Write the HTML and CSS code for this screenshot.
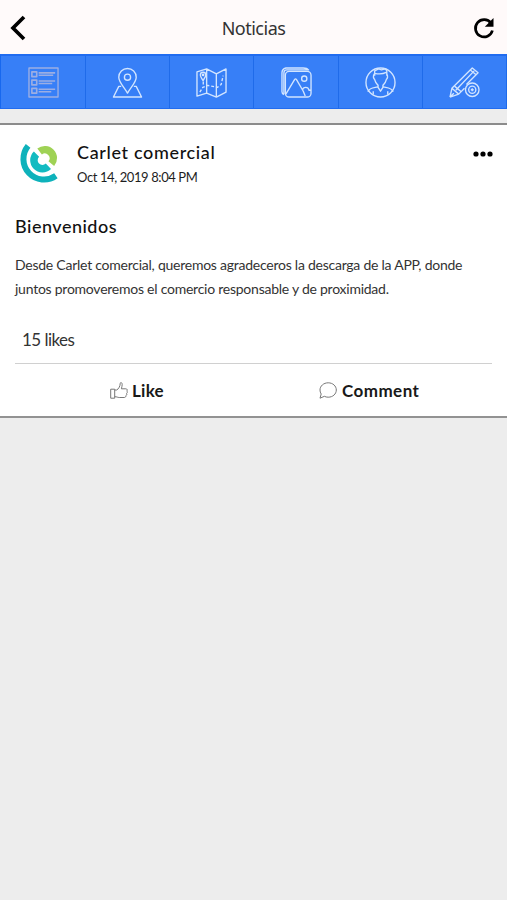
FILE: index.html
```html
<!DOCTYPE html>
<html lang="es">
<head>
<meta charset="utf-8">
<title>Noticias</title>
<link rel="stylesheet" href="styles.css">
</head>
<body>
<header class="topbar">
  <svg class="back" viewBox="0 0 16 26"><path d="M14 2 3 13l11 11"/></svg>
  <h1>Noticias</h1>
  <svg class="refresh" viewBox="0 0 24 24"><path class="arc" d="M19 7.200A8.600 8.600 0 1 0 20.400 14.500"/><path d="M21.500 2v8.700h-8.700z"/></svg>
</header>
<nav class="tabs">
  <a class="active"><svg viewBox="0 0 32 32"><path d="M1 1h30v30H1z"/><path class="rows" d="M4 5h5v5H4zM4 13.500h5v5H4zM4 22h5v5H4zM11 6h17M11 8.500h15M11 14.500h17M11 17h14M11 23h17M11 25.500h13"/></svg></a>
  <a><svg viewBox="0 0 32 32"><path d="M16 27C13 21 7 16 7 10.500a9 9 0 0 1 18 0C25 16 19 21 16 27zM9.500 20H7L1.500 31h29L25 20h-2.500"/><circle cx="16" cy="10.500" r="3.200"/></svg></a>
  <a><svg viewBox="0 0 32 32"><path d="m1 5 10-3 10 5 10-5v24l-10 5-10-4-10 3zM11 2v25M21 7v24M7.300 14C5.500 11 4.500 10 4.500 8.200a2.800 2.800 0 0 1 5.600 0C10.100 10 9 11 7.300 14z"/><path stroke-dasharray="3 2" d="M7.500 15v4M4 26l3-5 5-2 10 2 4-3 2-9"/><circle cx="7.300" cy="8.200" r=".7"/></svg></a>
  <a><svg viewBox="0 0 32 32"><rect x="4.500" y="4.500" width="26.500" height="26.500" rx="4"/><path d="M3 28.500q-2-1-2-3V6q0-4 4-5h18q4 0 5 2M3 28V6q0-3 3-3h23M5 28l9-15q1-1.500 2 0l7 12 2 5M22 24c1-4 6-4 7 0h2"/><circle cx="24" cy="12" r="2.700"/></svg></a>
  <a><svg viewBox="0 0 32 32"><circle cx="16" cy="16" r="15"/><path d="M9.500 7C8 10 9 12 10 13c1 4 3 5 3.500 6v2l2.500 4 2.500-4v-2c.5-1 2.500-2 3.500-6 1-1 2-3 .5-6M10 9V4l4-2 3 1 4-1 1.500 2v5M10 6.500q7 1.500 12-1M13 20.500c-2 1-8 0-10 5M19 20.500c2 1 8 0 10 5M8.500 25v3.500M23.500 25v3.500"/></svg></a>
  <a><svg viewBox="0 0 32 32"><path d="m1 31 2-9L24 1l6 5-12 12M1 31l9-3 6-6M3 22l7 6M7 24 26 4M6 20l6 5M22 3l6 5M1 31l4-4"/><circle cx="24" cy="23.500" r="7"/><circle cx="24" cy="23.500" r="3.700"/><path d="M24 22v3M22.500 23.500h3"/></svg></a>
</nav>
<article class="post">
  <div class="author">
    <svg class="logo" viewBox="0 0 42 44"><g fill="none"><path stroke="#0eb2bb" stroke-width="6" d="M9.100 5.900A20.600 20.600 0 0 0 36.900 35.800"/><path stroke="#13bbc1" stroke-width="7.500" d="M17.500 14.100a8.500 8.500 0 0 0 11.900 12.200"/><path stroke="#9fd255" stroke-width="7.500" d="M20.600 11.500a8.500 8.500 0 0 1 11.700 12.200"/></g></svg>
    <div class="who"><h2>Carlet comercial</h2><time>Oct 14, 2019 8:04 PM</time></div>
    <svg class="more" viewBox="0 0 20 6"><circle cx="3" cy="3" r="2.600"/><circle cx="10" cy="3" r="2.600"/><circle cx="17" cy="3" r="2.600"/></svg>
  </div>
  <h3>Bienvenidos</h3>
  <p>Desde Carlet comercial, queremos agradeceros la descarga de la APP, donde<br>juntos promoveremos el comercio responsable y de proximidad.</p>
  <div class="likes">15 likes</div>
  <div class="actions">
    <button class="like"><svg viewBox="0 0 18 17"><path d="M.7 7.200h4v9h-4zM4.700 8h2c2-1 3.500-4 3.500-6.500 0-1.500 2-1.300 2 1 0 1.500-.6 3-.8 4.300h4.400c1.500 0 1.800 1.300 1 2.200.8.800.6 1.800-.2 2.400.5.800.2 1.700-.7 2.200.2 1-.5 1.900-1.600 1.900h-5c-1.700 0-2.300-.8-4.600-.8"/></svg><span>Like</span></button>
    <button class="comment"><svg viewBox="0 0 18 17"><path d="M1 16.200 2.200 12A7 7 0 0 1 1 8C1 4 4.600.8 9.200.8S17.300 4 17.300 8s-3.500 7.200-8.100 7.200c-1.400 0-2.700-.3-3.800-.9z"/></svg><span>Comment</span></button>
  </div>
</article>
</body>
</html>
```

FILE: styles.css
```css
* { box-sizing: border-box; }
body { margin: 0; min-height: 900px; background: #ededed; color: #1e1e1e; font-family: Lato, "Liberation Sans", sans-serif; }
h1, h2, h3, p { margin: 0; white-space: nowrap; }
.topbar { height: 54px; padding: 2px 11px 0 10px; display: flex; align-items: center; justify-content: space-between; background: #fffafa; }
.topbar h1 { font: 400 18px/24px "Noto Sans", sans-serif; letter-spacing: -.5px; color: #333; margin-left: 9px; }
.back { width: 16px; height: 26px; fill: none; stroke: #000; stroke-width: 3.700; }
.refresh { width: 24px; height: 24px; }
.refresh .arc { fill: none; stroke: #000; stroke-width: 2.700; }
.tabs { height: 55px; display: grid; grid-template-columns: repeat(6, 1fr); padding-left: 1px; background: #377ff7; border-top: 2px solid #216cf0; border-bottom: 1px solid #216cf0; border-left: 1px solid #1768ef; }
.tabs a { display: flex; align-items: center; justify-content: center; border-right: 1px solid #1f6bea; padding-top: 1px; }
.tabs svg { width: 31px; height: 31px; fill: none; stroke: #d2e5ff; stroke-width: 1.400; stroke-linejoin: round; }
.tabs .active svg { stroke: #9caee3; }
.tabs .active .rows { stroke-width: 1.700; }
.post { height: 295px; margin-top: 14px; padding: 0 15px; background: #fff; border-top: 2px solid #8c8c8c; border-bottom: 2px solid #929292; }
.author { height: 79px; padding-top: 15px; display: flex; align-items: flex-start; }
.logo { width: 42px; height: 44px; margin-left: 4px; }
.who { margin-left: 16px; flex: 1; }
h2, h3 { font-size: 18px; font-weight: 500; letter-spacing: .650px; color: #111; }
.who h2 { line-height: 25px; }
time { display: block; font-size: 13px; line-height: 25px; letter-spacing: -.400px; }
.more { width: 20px; height: 6px; margin: 11px -1px 0 0; }
h3 { line-height: 44px; letter-spacing: .500px; }
p { height: 68px; padding-top: 5px; font-size: 14px; line-height: 24px; letter-spacing: -.245px; color: #333; }
.likes { height: 48px; padding: 13px 7px 0; font-size: 17px; line-height: 22px; letter-spacing: -.550px; color: #333; border-bottom: 1px solid #d0d0d0; }
.actions { display: flex; height: 54px; }
button { border: 0; padding: 0; background: none; font: 700 17px/24px Lato, sans-serif; color: #191919; display: flex; align-items: center; gap: 4px; }
button svg { width: 18px; height: 17px; margin-bottom: 2px; fill: none; stroke: #777; stroke-width: 1; }
.like { margin-left: 95px; width: 209px; letter-spacing: .250px; }
.comment { letter-spacing: .450px; gap: 5px; }
```
